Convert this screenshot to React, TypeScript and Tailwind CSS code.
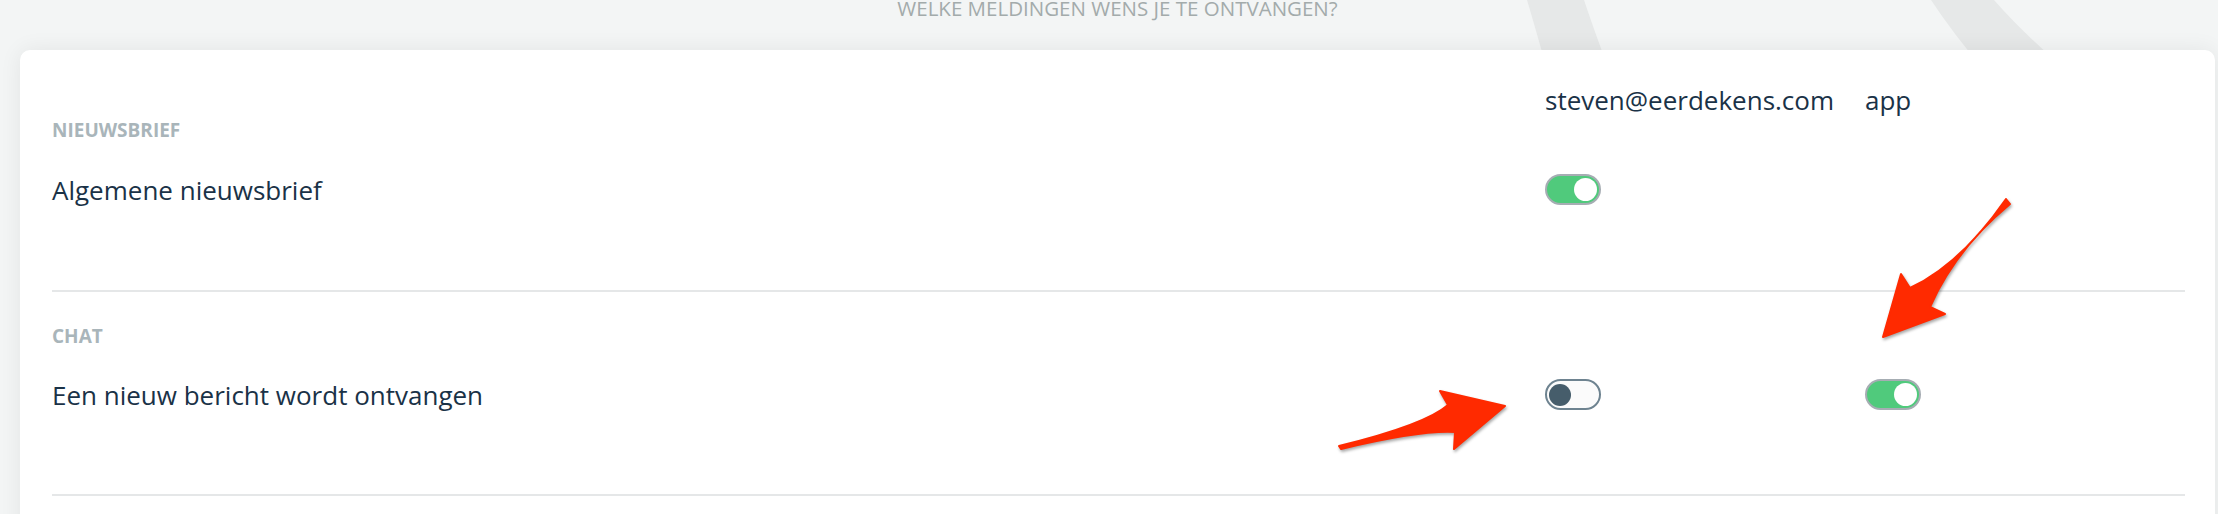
import React from 'react';

const Toggle = ({ on }: { on: boolean }) => (
  <div
    className={
      on
        ? 'flex h-[31px] w-[56px] items-center justify-end rounded-full border-2 border-[#a6adb3] bg-[#50ca7c] px-[2px]'
        : 'flex h-[31px] w-[56px] items-center justify-start rounded-full border-2 border-[#6e8390] bg-[#fbfbfb] px-[2px]'
    }
  >
    <div
      className={
        on ? 'h-[23px] w-[23px] rounded-full bg-white' : 'h-[22px] w-[22px] rounded-full bg-[#465d6b]'
      }
    />
  </div>
);

const Divider = () => <div className="h-[2px] bg-[#e5e7e8]" />;

const Label = ({ children }: { children: React.ReactNode }) => (
  <div className="h-[20px] text-[19px] font-bold leading-[20px] text-[#a9b5ba]">{children}</div>
);

const Row = ({ text, email, app }: { text: string; email?: boolean; app?: boolean }) => (
  <div className="grid h-[31px] grid-cols-[1fr_320px_320px] items-center">
    <div className="text-[26px] leading-none text-[#1a3247]">{text}</div>
    <div>{email !== undefined && <Toggle on={email} />}</div>
    <div>{app !== undefined && <Toggle on={app} />}</div>
  </div>
);

const App = () => {
  return (
    <div className="relative h-[514px] w-full overflow-hidden bg-[#f3f5f5] font-['Open_Sans',sans-serif]">
      {/* background swooshes */}
      <svg className="absolute left-0 top-0" width="2218" height="80" viewBox="0 0 2218 80">
        <path d="M1527 0 L1584 0 Q1594 30 1609 70 L1547 70 Q1536 30 1527 0 Z" fill="#e6e8e8" />
        <path d="M1931 0 L1994 0 Q2022 32 2066 70 L1984 70 Q1952 32 1931 0 Z" fill="#e6e8e8" />
      </svg>

      <div className="relative ml-[20px] mr-[3px] h-[14px] text-center text-[20.5px] leading-[16px] text-[#a3abab]">
        WELKE MELDINGEN WENS JE TE ONTVANGEN?
      </div>

      <div className="relative ml-[20px] mr-[3px] mt-[36px] rounded-[10px] bg-white pb-[200px] pl-[32px] pr-[30px] shadow-[0_0_22px_rgba(0,0,0,0.07)]">
        <div className="pt-[37px]">
          <div className="grid grid-cols-[1fr_320px_320px] text-[26px] leading-none text-[#1a3247]">
            <div />
            <div>steven@eerdekens.com</div>
            <div>app</div>
          </div>
          <div className="mt-[7px]">
            <Label>NIEUWSBRIEF</Label>
          </div>
          <div className="mt-[34px] pb-[85px]">
            <Row text="Algemene nieuwsbrief" email={true} />
          </div>
          <Divider />
        </div>

        <div className="pt-[34px]">
          <Label>CHAT</Label>
          <div className="mt-[33px] pb-[84px]">
            <Row text="Een nieuw bericht wordt ontvangen" email={false} app={true} />
          </div>
          <Divider />
        </div>
      </div>

      {/* annotation arrows */}
      <svg
        className="pointer-events-none absolute left-0 top-0 drop-shadow-[1px_2px_1.5px_rgba(0,0,0,0.35)]"
        width="2218"
        height="514"
        viewBox="0 0 2218 514"
      >
        <path
          d="M1339 446 Q1425 425 1448 405 L1440 391 L1505 406 L1454 449 L1455 432 Q1420 430 1341 449 Z"
          fill="#ff2a00"
          stroke="#ff2a00"
          strokeWidth="2"
          strokeLinejoin="round"
        />
        <path
          d="M2006 199 Q1960 265 1910 288 L1901 274 L1883 337 L1945 314 L1930 307 Q1955 250 2010 204 Z"
          fill="#ff2a00"
          stroke="#ff2a00"
          strokeWidth="2"
          strokeLinejoin="round"
        />
      </svg>
    </div>
  );
};

export default App;
